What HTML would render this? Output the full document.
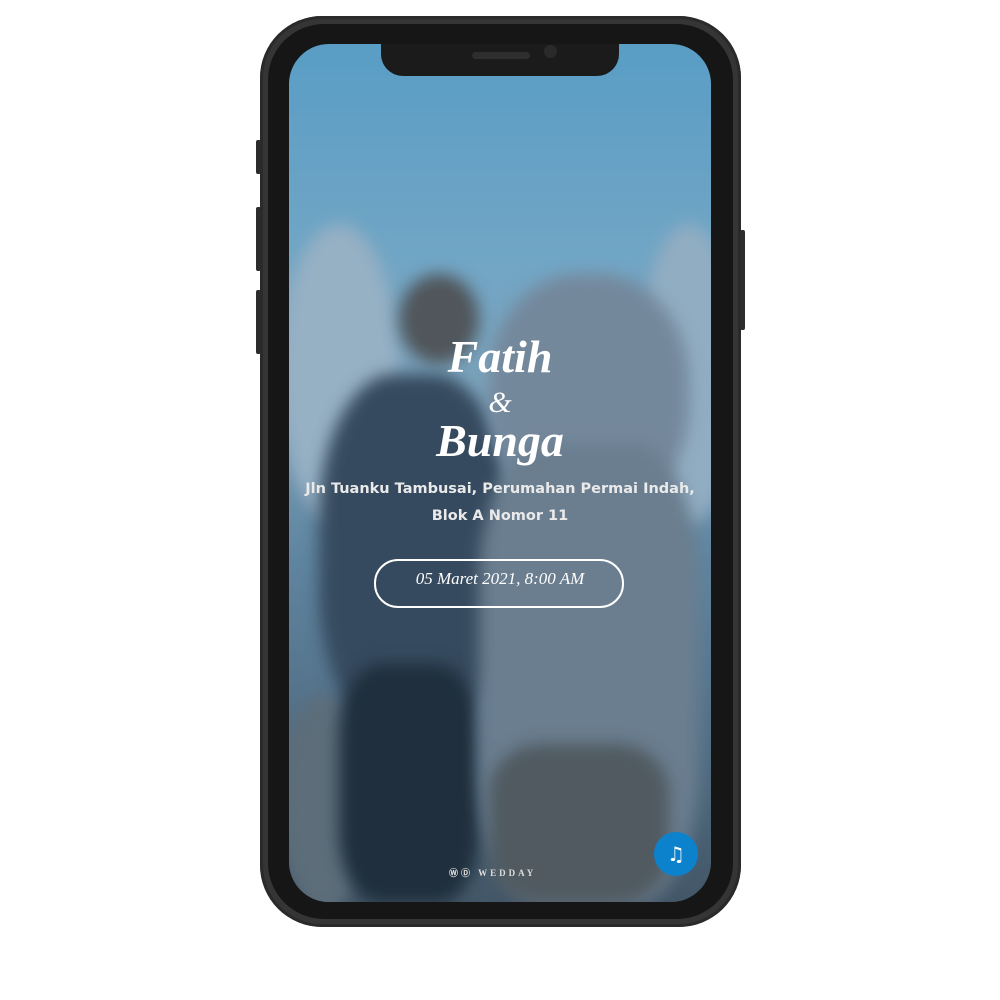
<!DOCTYPE html>
<html><head><style>
html,body{margin:0;width:1000px;height:1000px;background:#fff;overflow:hidden}
.phone{position:absolute;left:260px;top:16px;width:481px;height:911px;border-radius:62px;background:#353535;box-shadow:inset 0 0 0 3px #2a2a2a}
.inner{position:absolute;left:268px;top:24px;width:465px;height:895px;border-radius:56px;background:#161616}
.btn{position:absolute;background:#2c2c2c;border-radius:2px}
.screen{position:absolute;left:289px;top:44px;width:422px;height:858px;border-radius:40px;overflow:hidden;
background:linear-gradient(180deg,#67b0d8 0%,#86bbd8 25%,#93b7cb 40%,#6f91a8 60%,#5e7587 80%,#4a5660 100%)}
.blob{position:absolute;border-radius:50%;filter:blur(8px)}
.notch{position:absolute;left:381px;top:44px;width:238px;height:32px;background:#1b1b1b;border-radius:0 0 22px 22px}
.t{position:absolute;left:289px;width:422px;text-align:center;color:#fff;font-family:"Liberation Serif",serif;font-style:italic;font-weight:bold}
</style></head><body>
<div class="btn" style="left:256px;top:140px;width:5px;height:34px"></div>
<div class="btn" style="left:256px;top:207px;width:5px;height:64px"></div>
<div class="btn" style="left:256px;top:290px;width:5px;height:64px"></div>
<div class="btn" style="left:740px;top:230px;width:5px;height:100px"></div>
<div class="phone"></div>
<div class="inner"></div>
<div class="screen">
 <div class="blob" style="left:-10px;top:180px;width:120px;height:300px;background:#b5c8d6"></div>
 <div class="blob" style="left:350px;top:180px;width:100px;height:300px;background:#afc4d3"></div>
 <div class="blob" style="left:-10px;top:650px;width:90px;height:220px;background:#6c7378"></div>
 <div class="blob" style="left:110px;top:230px;width:80px;height:90px;background:#5c5550"></div>
 <div class="blob" style="left:30px;top:330px;width:190px;height:360px;background:#3a4655;border-radius:40%"></div>
 <div class="blob" style="left:50px;top:620px;width:140px;height:240px;background:#1d2329;border-radius:30%"></div>
 <div class="blob" style="left:200px;top:230px;width:200px;height:240px;background:#8a95a3;border-radius:45%"></div>
 <div class="blob" style="left:190px;top:400px;width:220px;height:460px;background:#7d8893;border-radius:30%"></div>
 <div class="blob" style="left:200px;top:700px;width:180px;height:160px;background:#5b5a57;border-radius:30%"></div>
 <div style="position:absolute;left:0;top:0;width:100%;height:100%;background:rgba(40,90,130,0.22)"></div>
 <div style="position:absolute;left:365px;top:788px;width:44px;height:44px;border-radius:50%;background:#0c82cc"></div>
 <div style="position:absolute;left:365px;top:788px;width:44px;height:44px;color:#fff;font:20px 'DejaVu Sans';text-align:center;line-height:44px">♫</div>
 <div style="position:absolute;left:160px;top:822px;font:bold 9px 'Liberation Serif';color:#ddd;letter-spacing:3px">ⓌⒹ WEDDAY</div>
</div>
<div class="notch"></div>
<div style="position:absolute;left:472px;top:52px;width:58px;height:7px;border-radius:4px;background:#2e2e2e"></div>
<div style="position:absolute;left:544px;top:45px;width:13px;height:13px;border-radius:50%;background:#2a2a2a"></div>
<div class="t" style="top:330px;font-size:46px">Fatih</div>
<div class="t" style="top:386px;font-size:30px;font-weight:normal">&amp;</div>
<div class="t" style="top:414px;font-size:46px">Bunga</div>
<div class="t" style="top:476px;font:bold 14.5px/27px 'DejaVu Sans',sans-serif;color:#eaeaea">Jln Tuanku Tambusai, Perumahan Permai Indah,<br>Blok A Nomor 11</div>
<div style="position:absolute;left:374px;top:559px;width:246px;height:45px;border:2px solid #fff;border-radius:24px"></div>
<div class="t" style="top:569px;font-size:17px;font-weight:normal">05 Maret 2021, 8:00 AM</div>
</body></html>
